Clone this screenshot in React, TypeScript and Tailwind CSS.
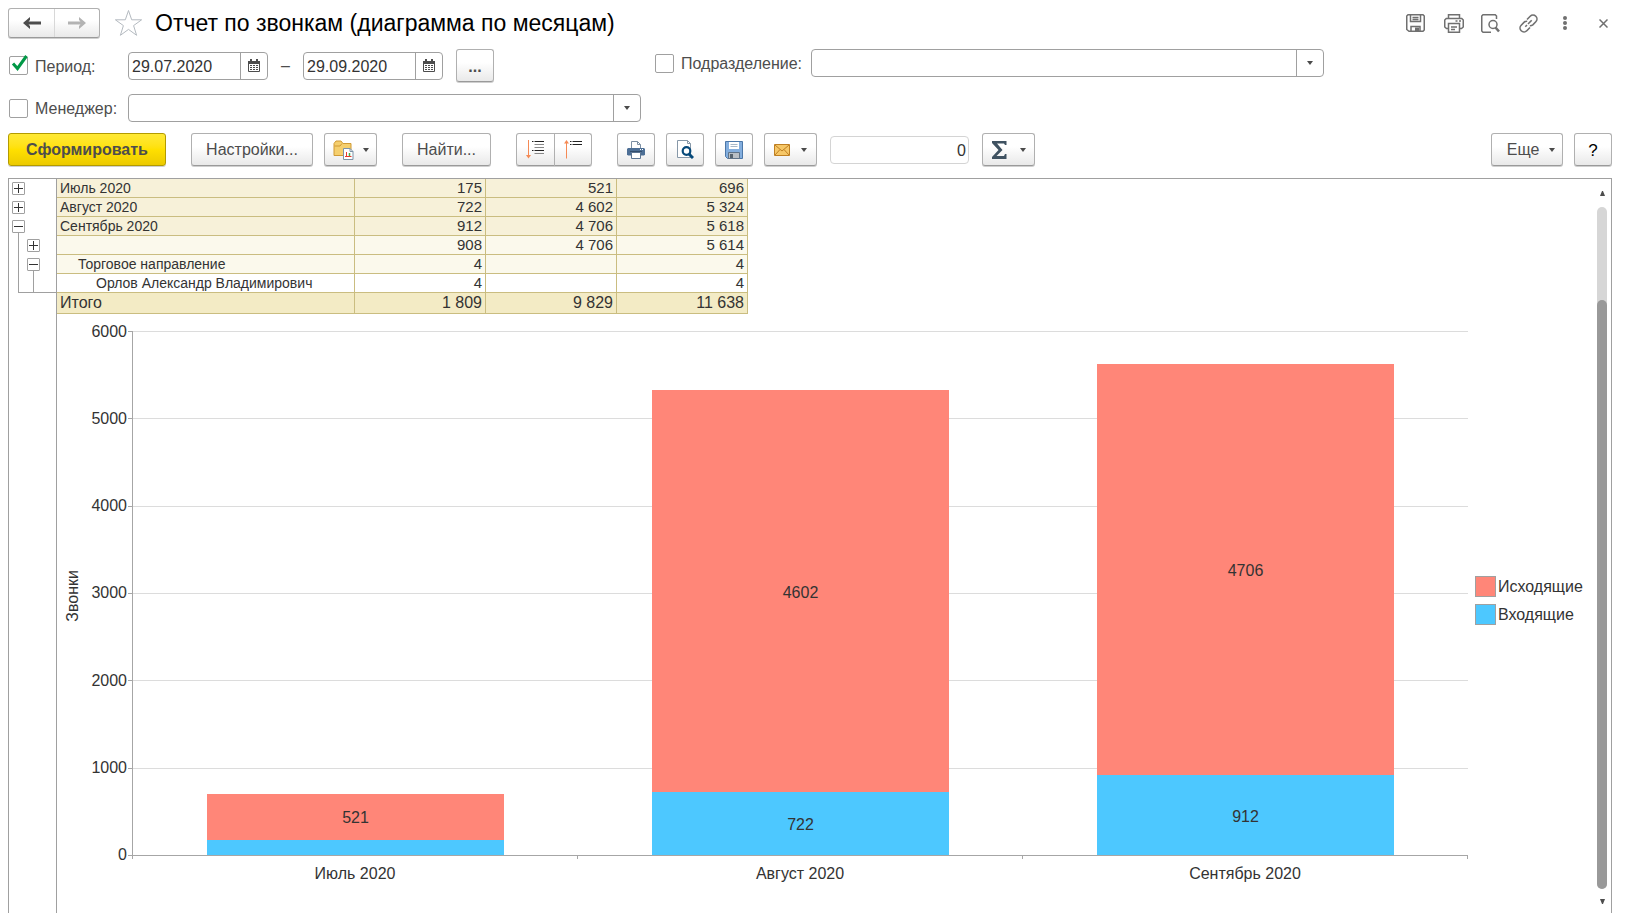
import type React from "react"
import { useState } from "react"
import clsx from "clsx"

type Row = {
  name: string
  level: number
  incoming: string
  outgoing: string
  total: string
  tone: string
}

const rows: Row[] = [
  { name: "Июль 2020", level: 0, incoming: "175", outgoing: "521", total: "696", tone: "bg-[#f7f1d9]" },
  { name: "Август 2020", level: 0, incoming: "722", outgoing: "4 602", total: "5 324", tone: "bg-[#f7f1d9]" },
  { name: "Сентябрь 2020", level: 0, incoming: "912", outgoing: "4 706", total: "5 618", tone: "bg-[#f7f1d9]" },
  { name: "", level: 1, incoming: "908", outgoing: "4 706", total: "5 614", tone: "bg-[#fbf9ec]" },
  { name: "Торговое направление", level: 1, incoming: "4", outgoing: "", total: "4", tone: "bg-[#fbf9ec]" },
  { name: "Орлов Александр Владимирович", level: 2, incoming: "4", outgoing: "", total: "4", tone: "bg-white" },
]

const months = [
  { name: "Июль 2020", incoming: 175, outgoing: 521 },
  { name: "Август 2020", incoming: 722, outgoing: 4602 },
  { name: "Сентябрь 2020", incoming: 912, outgoing: 4706 },
]

const axisMax = 6000
const ticks = [6000, 5000, 4000, 3000, 2000, 1000, 0]
const indents = ["pl-[3px]", "pl-[21px]", "pl-[39px]"]

const buttonFace =
  "flex h-[33px] items-center justify-center border border-[#b0b0b0] border-b-[#9a9a9a] bg-linear-to-b from-white from-40% to-[#e9e9e9] shadow-[0_1px_0_#cfcfcf]"

function ToolButton({
  label,
  className,
  children,
}: {
  label?: string
  className?: string
  children: React.ReactNode
}) {
  return (
    <button type="button" aria-label={label} className={clsx(buttonFace, "shrink-0 rounded-[3px]", className)}>
      {children}
    </button>
  )
}

function Caret() {
  return (
    <svg width="6" height="4" viewBox="0 0 6 4" fill="#4a4a4a">
      <path d="M0 0h6L3 4z" />
    </svg>
  )
}

function CheckField({ label, checked, width }: { label: string; checked?: boolean; width: string }) {
  const [on, setOn] = useState(Boolean(checked))
  return (
    <label className={clsx("flex shrink-0 items-center gap-[7px] pl-px text-[#4d4d4d]", width)}>
      <span className="relative flex">
        <input
          type="checkbox"
          checked={on}
          onChange={() => setOn(!on)}
          className="h-[19px] w-[19px] appearance-none rounded-[2px] border border-[#a0a0a0] bg-white"
        />
        {on && (
          <svg className="pointer-events-none absolute -top-1 left-0" width="21" height="22" viewBox="0 0 21 22">
            <path d="M4 11.500l4.500 5L17.500 4" fill="none" stroke="#009846" strokeWidth="3" />
          </svg>
        )}
      </span>
      <span className="pt-0.5">{label}</span>
    </label>
  )
}

function DateField({ label, value }: { label: string; value: string }) {
  return (
    <div className="flex h-7 w-[140px] shrink-0 rounded-[4px] border border-[#a0a0a0] bg-white">
      <input
        type="text"
        aria-label={label}
        defaultValue={value}
        className="w-0 flex-1 bg-transparent px-[3px] pt-0.5 text-[#333] outline-none"
      />
      <button
        type="button"
        aria-label="Выбрать дату"
        className="flex w-[27px] items-center justify-center border-l border-[#a0a0a0]"
      >
        <svg width="12" height="13" viewBox="0 0 12 13" fill="none">
          <path d="M.5 2.500h11v10H.5z" stroke="#4d4d4d" />
          <path d="M0 2h12v3H0zM2 0h2v2H2zM8 0h2v2H8z" fill="#4d4d4d" />
          <path
            d="M2 6h2v1H2zM5 6h2v1H5zM8 6h2v1H8zM2 8h2v1H2zM5 8h2v1H5zM8 8h2v1H8zM2 10h2v1H2zM5 10h2v1H5zM8 10h2v1H8z"
            fill="#4d4d4d"
          />
        </svg>
      </button>
    </div>
  )
}

function SelectField({ label }: { label: string }) {
  return (
    <div className="relative h-7 w-[513px] rounded-[4px] border border-[#a0a0a0] bg-white">
      <select aria-label={label} className="h-full w-full appearance-none bg-transparent px-1 outline-none">
        <option value=""></option>
      </select>
      <span className="pointer-events-none absolute inset-y-0 right-0 flex w-[27px] items-center justify-center border-l border-[#a0a0a0]">
        <Caret />
      </span>
    </div>
  )
}

function Header() {
  return (
    <header className="flex h-[30px] items-center">
      <div className="flex h-[30px] shrink-0 rounded-[3px] border border-[#b0b0b0] border-b-[#9a9a9a] bg-linear-to-b from-white from-40% to-[#e9e9e9] shadow-[0_1px_0_#cfcfcf]">
        <button type="button" aria-label="Назад" className="flex w-[45px] items-center justify-center">
          <svg width="18" height="12" viewBox="0 0 18 12">
            <path d="M7 0L0 6l7 6V9L5.500 7.500H18v-3H5.500L7 3z" fill="#4d4d4d" />
          </svg>
        </button>
        <button
          type="button"
          aria-label="Вперед"
          className="flex w-[45px] items-center justify-center border-l border-[#d8d8d8]"
        >
          <svg width="18" height="12" viewBox="0 0 18 12">
            <path d="M11 0l7 6-7 6V9l1.500-1.500H0v-3h12.500L11 3z" fill="#b3b3b3" />
          </svg>
        </button>
      </div>
      <button type="button" aria-label="В избранное" className="ml-3.5 shrink-0">
        <svg width="29" height="28" viewBox="0 0 29 28">
          <path
            d="M14.500 1.500l3.200 9.300h9.900l-8 5.800 3 9.700-8.100-5.900-8.100 5.900 3-9.700-8-5.800h9.900z"
            fill="#fff"
            stroke="#b4bac0"
          />
        </svg>
      </button>
      <h1 className="ml-3 flex-1 truncate text-[23px] leading-7 text-black">
        Отчет по звонкам (диаграмма по месяцам)
      </h1>

      <div className="mr-1 flex shrink-0 items-center text-[#707070]">
        <button type="button" aria-label="Сохранить">
          <svg width="19" height="18" viewBox="0 0 19 18" fill="none" stroke="currentColor" strokeWidth="1.500">
            <path d="M2 .75h15l1.250 1.250v14L17 17.250H3L.75 15.500V2z" />
            <path d="M4.500 1v6.500h10V1M6.500 3.500h6M6.500 5.500h6M5 17v-4.500h9V17" />
            <path d="M9 13.500h4V17H9z" fill="currentColor" stroke="none" />
          </svg>
        </button>
        <button type="button" aria-label="Печать" className="ml-[19px]">
          <svg width="20" height="19" viewBox="0 0 20 19" fill="none" stroke="currentColor" strokeWidth="1.500">
            <path d="M4.500 4.500V.75h11V4.500" />
            <path d="M4.500 14.500H2.500L.75 13V6l1.500-1.500h15.500L19.250 6v7l-1.750 1.500h-2" />
            <path d="M4.500 9.500h11v8.750h-11zM7 13h6M7 15.500h4M11.500 7h2M15 7h2" />
          </svg>
        </button>
        <button type="button" aria-label="Просмотр" className="ml-[17px]">
          <svg width="19" height="19" viewBox="0 0 19 19" fill="none" stroke="currentColor" strokeWidth="1.500">
            <path d="M15.500 5V2L14.250.75H2L.75 2v15L2 18.250h8" />
            <circle cx="12" cy="10.500" r="4" />
            <path d="M14.500 13.500l3.500 4" strokeWidth="2.500" />
          </svg>
        </button>
        <button type="button" aria-label="Ссылка" className="ml-[19px]">
          <svg width="19" height="19" viewBox="0 0 19 19" fill="none" stroke="currentColor" strokeWidth="1.600">
            <path d="M8 5.500l3.200-3.300a3.900 3.900 0 0 1 5.600 5.600L13.800 10.800q-1.200 1-3 .9" />
            <path d="M11 13.500l-3.200 3.300a3.900 3.900 0 0 1-5.600-5.600L5.200 8.200q1.200-1 3-.9" />
            <path d="M6.300 12.700l1.700-1.700M9 10l3.700-3.700" />
          </svg>
        </button>
        <button type="button" aria-label="Меню" className="ml-[25px]">
          <svg width="4" height="14" viewBox="0 0 4 14" fill="currentColor">
            <circle cx="2" cy="2" r="2" />
            <circle cx="2" cy="7" r="2" />
            <circle cx="2" cy="12" r="2" />
          </svg>
        </button>
        <button type="button" aria-label="Закрыть" className="ml-8">
          <svg width="9" height="9" viewBox="0 0 9 9" stroke="currentColor" strokeWidth="1.500">
            <path d="M.5.5l8 8M8.500.5l-8 8" />
          </svg>
        </button>
      </div>
    </header>
  )
}

function Filters() {
  return (
    <div className="mt-[11px] flex flex-wrap items-start gap-x-[13px]">
      <div className="flex flex-col gap-3">
        <div className="flex h-[33px] items-center">
          <CheckField label="Период:" checked width="w-[120px]" />
          <DateField label="Начало периода" value="29.07.2020" />
          <span className="w-[35px] text-center text-[#4d4d4d]">–</span>
          <DateField label="Конец периода" value="29.09.2020" />
          <ToolButton label="Выбрать период" className="ml-[13px] w-[38px] pt-0.5 font-bold text-[#4d4d4d]">
            ...
          </ToolButton>
        </div>
        <div className="flex items-center">
          <CheckField label="Менеджер:" width="w-[120px]" />
          <SelectField label="Менеджер" />
        </div>
      </div>
      <div className="flex items-center">
        <CheckField label="Подразделение:" width="w-[157px]" />
        <SelectField label="Подразделение" />
      </div>
    </div>
  )
}

function Toolbar() {
  return (
    <div className="mt-[11px] flex items-center text-[#4d4d4d]">
      <button
        type="button"
        className="h-[33px] w-[158px] shrink-0 rounded-[3px] border border-[#b39b00] bg-linear-to-b from-[#ffe934] via-[#ffe000] to-[#ecca00] font-bold shadow-[0_1px_0_#cfcfcf]"
      >
        Сформировать
      </button>
      <ToolButton className="ml-[25px] w-[122px]">Настройки...</ToolButton>
      <ToolButton label="Варианты отчета" className="ml-[11px] w-[53px] gap-[9px]">
        <svg width="21" height="20" viewBox="0 0 21 20">
          <path d="M1 15.500V3.500L3 1h5l2 2.500h8v12z" fill="#f5cf6e" stroke="#d09a35" />
          <path d="M1.500 6H7l2-2.500" fill="none" stroke="#d09a35" />
          <path d="M10.500 8.500h6.500l3 3v8h-9.500z" fill="#fff" stroke="#7c93a8" />
          <path d="M17 8.500v3h3" fill="none" stroke="#7c93a8" />
          <path d="M13.500 12v4" stroke="#e8372c" />
          <path d="M16.500 13v3" stroke="#3cae49" strokeWidth="1.500" />
          <path d="M12 16.500h6.500" stroke="#e8372c" />
        </svg>
        <Caret />
      </ToolButton>
      <ToolButton className="ml-[25px] w-[89px]">Найти...</ToolButton>
      <ToolButton label="Развернуть группы" className="ml-[25px] w-[39px] rounded-r-none">
        <svg width="19" height="19" viewBox="0 0 19 19">
          <path d="M2.500 0v16" stroke="#f58a55" />
          <path d="M0 15h5l-2.500 3.500z" fill="#f58a55" />
          <path d="M6 1.500h1.500M8.500 1.500H18M6 10.500h1.500M8.500 10.500H18" stroke="#222" />
          <path d="M8.500 4.500H18M8.500 7.500H18M8.500 13.500H18" stroke="#888" />
        </svg>
      </ToolButton>
      <ToolButton label="Свернуть группы" className="-ml-px w-[38px] rounded-l-none">
        <svg width="19" height="19" viewBox="0 0 19 19">
          <path d="M2.500 2v16.500" stroke="#f58a55" />
          <path d="M0 3.500h5L2.500 0z" fill="#f58a55" />
          <path d="M6 1.500h1.500M8.500 1.500H18M6 4.500h1.500M8.500 4.500H18" stroke="#222" />
        </svg>
      </ToolButton>
      <ToolButton label="Печать" className="ml-[25px] w-[38px]">
        <svg width="18" height="18" viewBox="0 0 18 18">
          <path d="M4.500 8V.5h6l3 3V8z" fill="#fff" stroke="#7c8fa3" />
          <path d="M10.500.5v3h3" fill="none" stroke="#7c8fa3" />
          <path d="M1 7h16l1 1v5.500l-1 1H1l-1-1V8z" fill="#4d6f96" />
          <path d="M3 10.500h12" stroke="#324e6e" />
          <path d="M13 8.500h1M15 8.500h1" stroke="#fff" />
          <path d="M4.500 11.500h9v6h-9z" fill="#fff" stroke="#5c7592" />
        </svg>
      </ToolButton>
      <ToolButton label="Просмотр" className="ml-[11px] w-[38px]">
        <svg width="18" height="19" viewBox="0 0 18 19">
          <path d="M1.500.5h10l3 3v14h-13z" fill="#fff" stroke="#8798a8" />
          <path d="M11.500.5v3h3" fill="none" stroke="#8798a8" />
          <circle cx="10.500" cy="11" r="3.800" fill="#fff" stroke="#06497a" strokeWidth="2.200" />
          <path d="M13 14l4 4" stroke="#06497a" strokeWidth="3" />
        </svg>
      </ToolButton>
      <ToolButton label="Сохранить" className="ml-[11px] w-[38px]">
        <svg width="18" height="18" viewBox="0 0 18 18">
          <path d="M.5.5h17v17h-15l-2-2z" fill="#83aede" stroke="#4c77a8" />
          <path d="M4 1h10v7H4z" fill="#fff" />
          <path d="M5.500 3.500h7M5.500 5.500h7" stroke="#a8b8c8" />
          <path d="M3.500 11.500h11v6h-11z" fill="#b9bfc5" stroke="#5f7388" />
          <path d="M5 13h3v4H5z" fill="#56636f" />
        </svg>
      </ToolButton>
      <ToolButton label="Отправить" className="ml-[11px] w-[53px] gap-[11px]">
        <svg width="16" height="12" viewBox="0 0 16 12">
          <path d="M.5.5h15v11H.5z" fill="#f6c767" stroke="#bf7f22" />
          <path d="M1 1l7 6 7-6M1 11l5-5.500M15 11l-5-5.500" fill="none" stroke="#bf7f22" />
        </svg>
        <Caret />
      </ToolButton>
      <input
        type="text"
        aria-label="Сумма"
        defaultValue="0"
        className="ml-[13px] h-7 w-[139px] rounded-[4px] border border-[#d4d4d4] bg-white px-[2px] pt-0.5 text-right text-[#333] outline-none"
      />
      <ToolButton label="Сумма" className="ml-[13px] w-[53px] gap-[13px]">
        <svg width="15" height="18" viewBox="0 0 15 18">
          <path d="M0 0h14.500v4H13l-1-1.500H5L10.500 9 4.500 15H12l1-2h1.500v5H0v-2l6.500-7L0 2z" fill="#3f5261" />
        </svg>
        <Caret />
      </ToolButton>
      <ToolButton className="ml-auto w-[72px] gap-2.5 pl-2">
        Еще
        <Caret />
      </ToolButton>
      <ToolButton label="Справка" className="ml-[11px] w-[38px] pt-0.5 text-[17px] text-black">
        ?
      </ToolButton>
    </div>
  )
}

function TreeToggle({ open }: { open?: boolean }) {
  return (
    <button
      type="button"
      aria-label={open ? "Свернуть" : "Развернуть"}
      className="flex h-[13px] w-[13px] shrink-0 items-center justify-center rounded-[1px] border border-[#a0a0a0] bg-white"
    >
      <svg width="9" height="9" viewBox="0 0 9 9" stroke="#333">
        <path d={open ? "M0 4.500h9" : "M0 4.500h9M4.500 0v9"} />
      </svg>
    </button>
  )
}

function TreeCell({ kind }: { kind: "plus" | "minus" | "line" }) {
  return (
    <div className={clsx("flex h-[19px] w-[13px] flex-col items-center", kind !== "line" && "pt-[3px]")}>
      {kind === "plus" && <TreeToggle />}
      {kind === "minus" && <TreeToggle open />}
      {kind !== "plus" && <div className="w-px flex-1 bg-[#a0a0a0]" />}
    </div>
  )
}

const tree: ("plus" | "minus" | "line")[][] = [
  ["plus"],
  ["plus"],
  ["minus"],
  ["line", "plus"],
  ["line", "minus"],
  ["line", "line"],
]

function GroupTree() {
  return (
    <div className="w-12 shrink-0 border-r border-[#a0a0a0] pl-[3px]">
      {tree.map((cells, i) => (
        <div key={i} className="flex gap-0.5">
          {cells.map((kind, j) => (
            <TreeCell key={j} kind={kind} />
          ))}
        </div>
      ))}
      <div className="-mt-px ml-1.5 h-px bg-[#a0a0a0]" />
    </div>
  )
}

function ReportTable() {
  const cell = "border-r border-b border-[#cabd80] p-0"
  const num = "w-[131px] pr-[3px] text-right"
  return (
    <table className="w-[691px] table-fixed border-separate border-spacing-0 text-[15px] leading-[18px] text-[#333]">
      <tbody>
        {rows.map((row, i) => (
          <tr key={i} className={row.tone}>
            <td className={clsx(cell, "h-[19px] w-[298px] text-[14px] leading-[18px]", indents[row.level])}>
              {row.name}
            </td>
            <td className={clsx(cell, num)}>{row.incoming}</td>
            <td className={clsx(cell, num)}>{row.outgoing}</td>
            <td className={clsx(cell, num)}>{row.total}</td>
          </tr>
        ))}
        <tr className="bg-[#f3ebc5] text-base leading-5">
          <td className={clsx(cell, "h-[21px] pl-[3px]")}>Итого</td>
          <td className={clsx(cell, num)}>1 809</td>
          <td className={clsx(cell, num)}>9 829</td>
          <td className={clsx(cell, num)}>11 638</td>
        </tr>
      </tbody>
    </table>
  )
}

function Chart() {
  return (
    <div className="mt-[17px] flex text-base text-[#333]">
      <div className="flex h-[529px] w-8 items-center justify-center">
        <span className="rotate-180 leading-4 [writing-mode:vertical-rl]">Звонки</span>
      </div>

      {/* value axis */}
      <div className="flex h-[525px] w-[43px] flex-col justify-between">
        {ticks.map((tick) => (
          <div key={tick} className="flex h-px items-center justify-end gap-px">
            <span>{tick}</span>
            <span className="h-px w-1 bg-[#a6a6a6]" />
          </div>
        ))}
      </div>

      <div className="min-w-0 flex-1">
        <div className="relative h-[525px]">
          <div className="absolute inset-0 flex flex-col justify-between">
            {ticks.map((tick) => (
              <div key={tick} className="h-px bg-[#dcdcdc]" />
            ))}
          </div>
          <div className="relative flex h-full border-b border-l border-[#a6a6a6]">
            {months.map((month) => (
              <div key={month.name} className="flex flex-1 flex-col items-center justify-end">
                <div
                  className="flex w-2/3 items-center justify-center bg-[#ff8678] pt-[3px]"
                  style={{ height: `${(month.outgoing / axisMax) * 100}%` }}
                >
                  {month.outgoing}
                </div>
                <div
                  className="flex w-2/3 items-center justify-center bg-[#4dc8ff] pt-[3px]"
                  style={{ height: `${(month.incoming / axisMax) * 100}%` }}
                >
                  {month.incoming > 300 && month.incoming}
                </div>
              </div>
            ))}
          </div>
        </div>
        <div className="flex items-start">
          <span className="h-[3px] w-px bg-[#a6a6a6]" />
          {months.map((month) => (
            <div key={month.name} className="flex flex-1 items-start">
              <span className="flex-1 pt-1.5 text-center">{month.name}</span>
              <span className="h-[3px] w-px bg-[#a6a6a6]" />
            </div>
          ))}
        </div>
      </div>

      <ul className="flex h-[539px] w-[129px] flex-col justify-center gap-[7px] pl-[7px]">
        <li className="flex h-[21px] items-center gap-0.5">
          <span className="h-[21px] w-[21px] border border-[#a0a0a0] bg-[#ff8678]" />
          Исходящие
        </li>
        <li className="flex h-[21px] items-center gap-0.5">
          <span className="h-[21px] w-[21px] border border-[#a0a0a0] bg-[#4dc8ff]" />
          Входящие
        </li>
      </ul>
    </div>
  )
}

function Scrollbar() {
  return (
    <div className="mr-1 flex w-2.5 shrink-0 flex-col">
      <button type="button" aria-label="Вверх" className="flex h-7 items-center justify-center">
        <svg width="5" height="5" viewBox="0 0 5 5" fill="#4d4d4d">
          <path d="M0 5h5L3 0H2z" />
        </svg>
      </button>
      <div className="flex flex-1 flex-col rounded-full bg-[#d6d6d6]">
        <div className="h-[93px]" />
        <div className="flex-1 rounded-full bg-[#999]" />
      </div>
      <button type="button" aria-label="Вниз" className="flex h-6 items-center justify-center">
        <svg width="5" height="5" viewBox="0 0 5 5" fill="#4d4d4d">
          <path d="M0 0h5L3 5H2z" />
        </svg>
      </button>
    </div>
  )
}

export default function App() {
  return (
    <div className="flex h-screen flex-col overflow-hidden bg-white px-2 pt-2 font-['Liberation_Sans',Arial,sans-serif] text-base">
      <div className="mr-[15px] flex min-h-0 flex-1 flex-col">
        <Header />
        <Filters />
        <Toolbar />
        <main className="mt-3 flex min-h-0 flex-1 overflow-hidden border border-b-0 border-[#a0a0a0]">
          <GroupTree />
          <div className="min-w-0 flex-1 overflow-hidden">
            <ReportTable />
            <Chart />
          </div>
          <Scrollbar />
        </main>
      </div>
    </div>
  )
}
